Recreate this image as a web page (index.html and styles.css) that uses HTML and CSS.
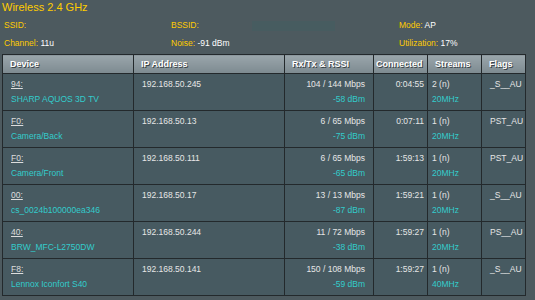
FILE: index.html
```html
<!DOCTYPE html>
<html lang="en">
<head>
  <meta charset="UTF-8" />
  <title>Wireless Clients</title>
  <link rel="stylesheet" href="styles.css">
</head>
<body>

  <div class="title">Wireless 2.4 GHz</div>

  <div class="info">
    <div><span class="label">SSID:</span></div>
    <div><span class="label">BSSID:</span> <span class="hidden-value"></span></div>
    <div><span class="label">Mode:</span> <span class="value">AP</span></div>
    <div><span class="label">Channel:</span> <span class="value">11u</span></div>
    <div><span class="label">Noise:</span> <span class="value">-91 dBm</span></div>
    <div><span class="label">Utilization:</span> <span class="value">17%</span></div>
  </div>

  <table class="clients">
    <colgroup>
      <col class="c-device">
      <col class="c-ip">
      <col class="c-rate">
      <col class="c-conn">
      <col class="c-streams">
      <col class="c-flags">
    </colgroup>
    <thead>
      <tr>
        <th>Device</th>
        <th>IP Address</th>
        <th>Rx/Tx &amp; RSSI</th>
        <th class="tight">Connected</th>
        <th>Streams</th>
        <th>Flags</th>
      </tr>
    </thead>
    <tbody>
      <tr>
        <td><span class="mac">94:</span><br><span class="name">SHARP AQUOS 3D TV</span></td>
        <td>192.168.50.245</td>
        <td class="right">104 / 144 Mbps<br><span class="name">-58 dBm</span></td>
        <td class="right">0:04:55</td>
        <td>2 (n)<br><span class="name">20MHz</span></td>
        <td>_S__AU</td>
      </tr>
      <tr>
        <td><span class="mac">F0:</span><br><span class="name">Camera/Back</span></td>
        <td>192.168.50.13</td>
        <td class="right">6 / 65 Mbps<br><span class="name">-75 dBm</span></td>
        <td class="right">0:07:11</td>
        <td>1 (n)<br><span class="name">20MHz</span></td>
        <td>PST_AU</td>
      </tr>
      <tr>
        <td><span class="mac">F0:</span><br><span class="name">Camera/Front</span></td>
        <td>192.168.50.111</td>
        <td class="right">6 / 65 Mbps<br><span class="name">-65 dBm</span></td>
        <td class="right">1:59:13</td>
        <td>1 (n)<br><span class="name">20MHz</span></td>
        <td>PST_AU</td>
      </tr>
      <tr>
        <td><span class="mac">00:</span><br><span class="name">cs_0024b100000ea346</span></td>
        <td>192.168.50.17</td>
        <td class="right">13 / 13 Mbps<br><span class="name">-87 dBm</span></td>
        <td class="right">1:59:21</td>
        <td>1 (n)<br><span class="name">20MHz</span></td>
        <td>_S__AU</td>
      </tr>
      <tr>
        <td><span class="mac">40:</span><br><span class="name">BRW_MFC-L2750DW</span></td>
        <td>192.168.50.244</td>
        <td class="right">11 / 72 Mbps<br><span class="name">-38 dBm</span></td>
        <td class="right">1:59:27</td>
        <td>1 (n)<br><span class="name">20MHz</span></td>
        <td>PS__AU</td>
      </tr>
      <tr>
        <td><span class="mac">F8:</span><br><span class="name">Lennox Iconfort S40</span></td>
        <td>192.168.50.141</td>
        <td class="right">150 / 108 Mbps<br><span class="name">-59 dBm</span></td>
        <td class="right">1:59:27</td>
        <td>1 (n)<br><span class="name">40MHz</span></td>
        <td>_S__AU</td>
      </tr>
    </tbody>
  </table>

</body>
</html>
```

FILE: styles.css
```css
body {
  font-family: "Liberation Sans", Arial, sans-serif;
  background: #4d5a5f;
  margin: 0;
  padding: 0 2px;
  color: #e6e6e6;
  font-size: 8.5px;
}

.title {
  font-size: 11px;
  line-height: 14px;
  color: #ffcc00;
}

.info {
  display: grid;
  grid-template-columns: 167px 228px 1fr;
  padding-left: 2px;
  margin-top: 2px;
}

.info > div {
  height: 18px;
  line-height: 18px;
  white-space: nowrap;
}

.label {
  color: #ffcc00;
}

.value {
  color: #ffffff;
}

.hidden-value {
  display: inline-block;
  width: 83px;
  height: 10px;
  vertical-align: middle;
  margin-left: 51px;
  background: #475c60;
}

.clients {
  border-collapse: collapse;
  table-layout: fixed;
  width: 523px;
  margin-top: 2px;
  background: #475a61;
  border: 1px solid #23292c;
}

.c-device { width: 131px; }
.c-ip { width: 151px; }
.c-rate { width: 89px; }
.c-conn { width: 54px; }
.c-streams { width: 54px; }
.c-flags { width: 44px; }

.clients th {
  height: 18px;
  padding: 0 0 0 7px;
  text-align: left;
  font-size: 9px;
  font-weight: bold;
  color: #ffffff;
  text-shadow: 1px 1px 0 #3a4347;
  background: linear-gradient(#9aa6ab, #7d8a90);
  border: 1px solid #23292c;
  white-space: nowrap;
}

.clients th.tight {
  padding-left: 2px;
}

.clients td {
  height: 30px;
  padding: 3px 6px 3px 8px;
  vertical-align: top;
  line-height: 15px;
  border: 1px solid #23292c;
  white-space: nowrap;
}

.clients td.right {
  text-align: right;
  padding-right: 8px;
}

.clients td:nth-child(4) {
  padding-right: 3px;
}

.clients td:nth-child(5) {
  padding-left: 4px;
}

.mac {
  text-decoration: underline;
  color: #dddddd;
}

.name {
  color: #33cccc;
}
```
